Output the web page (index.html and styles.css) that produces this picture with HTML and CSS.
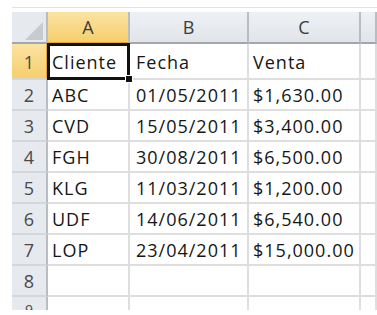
FILE: index.html
```html
<!DOCTYPE html>
<html lang="es">
  <head>
    <meta charset="UTF-8">
    <title>Hoja1</title>
    <link rel="stylesheet" href="styles.css">
  </head>
  <body>
    <div class="sheet">
      <div class="grid">
        <div class="corner">
          <svg width="18" height="18" viewBox="0 0 18 18">
            <polygon points="0,18 18,0 18,18" fill="#c7cbd0" />
          </svg>
        </div>
        <div class="col-head active">A</div>
        <div class="col-head">B</div>
        <div class="col-head">C</div>
        <div class="col-head"></div>

        <div class="row-head active first">1</div>
        <div class="cell first selected">Cliente<span class="handle"></span></div>
        <div class="cell first date">Fecha</div>
        <div class="cell first">Venta</div>
        <div class="cell first"></div>

        <div class="row-head">2</div>
        <div class="cell">ABC</div>
        <div class="cell date">01/05/2011</div>
        <div class="cell">$1,630.00</div>
        <div class="cell"></div>

        <div class="row-head">3</div>
        <div class="cell">CVD</div>
        <div class="cell date">15/05/2011</div>
        <div class="cell">$3,400.00</div>
        <div class="cell"></div>

        <div class="row-head">4</div>
        <div class="cell">FGH</div>
        <div class="cell date">30/08/2011</div>
        <div class="cell">$6,500.00</div>
        <div class="cell"></div>

        <div class="row-head">5</div>
        <div class="cell">KLG</div>
        <div class="cell date">11/03/2011</div>
        <div class="cell">$1,200.00</div>
        <div class="cell"></div>

        <div class="row-head">6</div>
        <div class="cell">UDF</div>
        <div class="cell date">14/06/2011</div>
        <div class="cell">$6,540.00</div>
        <div class="cell"></div>

        <div class="row-head">7</div>
        <div class="cell">LOP</div>
        <div class="cell date">23/04/2011</div>
        <div class="cell">$15,000.00</div>
        <div class="cell"></div>

        <div class="row-head">8</div>
        <div class="cell"></div>
        <div class="cell"></div>
        <div class="cell"></div>
        <div class="cell"></div>

        <div class="row-head last">9</div>
        <div class="cell"></div>
        <div class="cell"></div>
        <div class="cell"></div>
        <div class="cell"></div>
      </div>
    </div>
  </body>
</html>
```

FILE: styles.css
```css
html,
body {
  margin: 0;
  background-color: #ffffff;
}
body {
  width: 377px;
  height: 315px;
  overflow: hidden;
  font-family: "Open Sans", "Liberation Sans", sans-serif;
  font-size: 18px;
  color: #161616;
}
.sheet {
  margin: 7px 0 0 12px;
  border-top: 1px solid #e2e2e2;
  padding-top: 4px;
  height: 298px;
  overflow: hidden;
}
.grid {
  display: grid;
  grid-template-columns: 36px 82px 119px 112px 1fr;
  grid-template-rows: 32px 36px repeat(8, 31px);
}
.corner {
  background-color: #e6e9ed;
  border-right: 2px solid #b9bdc2;
  border-bottom: 2px solid #a3a7ad;
  display: flex;
  justify-content: flex-end;
  align-items: flex-end;
  padding: 0 3px 2px 0;
}
.col-head {
  background: linear-gradient(#eef1f4, #e1e5ea);
  border-right: 2px solid #b9bdc2;
  border-bottom: 2px solid #a3a7ad;
  display: flex;
  justify-content: center;
  align-items: center;
  color: #3c3c3c;
}
.col-head.active {
  background: linear-gradient(#fbe3a2, #f6cf6c);
  border-bottom-color: #e3a63c;
}
.row-head {
  background-color: #e6e9ed;
  border-right: 2px solid #b9bdc2;
  border-bottom: 2px solid #d3d6da;
  display: flex;
  justify-content: center;
  align-items: center;
  color: #4a4a4a;
}
.row-head.active {
  background: linear-gradient(#fbe3a2, #f6cf6c);
  border-right-color: #e3a63c;
}
.row-head.first {
  align-items: flex-end;
  padding-bottom: 4px;
}
.row-head.last {
  align-items: flex-start;
  line-height: 1;
  padding-top: 6px;
  font-size: 14px;
}
.cell {
  position: relative;
  border-right: 2px solid #dedede;
  border-bottom: 2px solid #dedede;
  display: flex;
  align-items: center;
  padding-left: 4px;
  white-space: nowrap;
  letter-spacing: 1px;
}
.cell.date {
  padding-left: 6px;
}
.cell.first {
  align-items: flex-end;
  padding-bottom: 4px;
}
.selected::after {
  content: "";
  position: absolute;
  top: -1px;
  left: -1px;
  right: -2px;
  bottom: -2px;
  border: 3px solid #111111;
}
.handle {
  position: absolute;
  right: -5px;
  bottom: -5px;
  width: 6px;
  height: 6px;
  background-color: #111111;
  border: 1px solid #ffffff;
  z-index: 2;
}
```
